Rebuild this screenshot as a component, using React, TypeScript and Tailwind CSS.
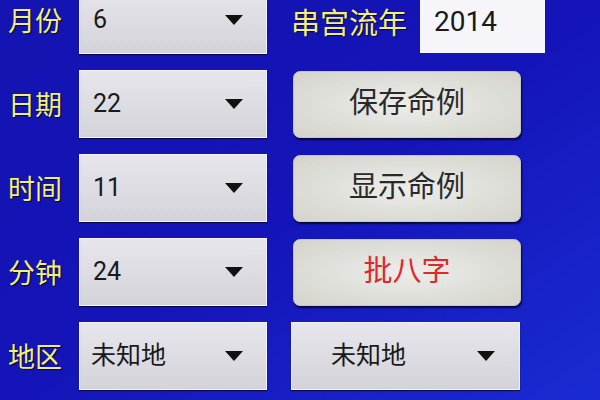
const font = "font-['Roboto','Noto_Sans_CJK_SC',sans-serif]";

const Label = ({ text }: { text: string }) => (
	<div className="w-[79px] pl-[8px] pt-[4px] text-[27px] leading-none text-[#f2f07a] [text-shadow:1px_1px_1px_rgba(0,0,0,0.7)]">
		{text}
	</div>
);

const Arrow = () => (
	<svg width="20" height="12" viewBox="0 0 20 12">
		<polygon points="1,1 19,1 10,11" fill="#111" />
	</svg>
);

const Spinner = ({ value, className }: { value: string; className: string }) => (
	<div
		className={`h-[68px] flex flex-row items-center bg-gradient-to-b from-[#e6e6ec] to-[#d3d3d9] border border-[#f4f4fa] shadow-[0_1px_1px_rgba(0,0,20,0.6)] ${className}`}
	>
		<span className="flex-1 text-[25px] text-[#1a1a1a]">{value}</span>
		<Arrow />
	</div>
);

const Button = ({ text, red }: { text: string; red?: boolean }) => (
	<button
		className={`ml-[26px] w-[228px] h-[67px] rounded-[7px] bg-[radial-gradient(ellipse_at_center,#ececea_0%,#d4d4cc_100%)] shadow-[1px_2px_2px_rgba(0,0,30,0.8)] border border-[#c8c8c0] text-[29px] ${red ? "text-[#e02828]" : "text-[#2a2a2a]"}`}
	>
		{text}
	</button>
);

export default function App() {
	return (
		<div
			className={`w-[600px] h-[400px] overflow-hidden bg-gradient-to-br from-[#1414b2] via-[#1414b8] to-[#1a2ad2] ${font}`}
		>
			<div className="flex flex-col gap-[16px] mt-[-14px]">
				<div className="flex flex-row items-center h-[68px]">
					<Label text="月份" />
					<Spinner value="6" className="w-[188px] pl-[13px] pr-[22px]" />
					<div className="ml-[24px] mt-[8px] text-[29px] leading-none text-[#f2f07a] [text-shadow:1px_1px_1px_rgba(0,0,0,0.7)]">
						串宫流年
					</div>
					<div className="ml-[13px] mt-[-2px] w-[125px] h-[68px] bg-[#f6f6fa] flex items-center pl-[14px] pt-[6px] text-[28px] text-[#1a1a1a]">
						2014
					</div>
				</div>
				<div className="flex flex-row items-center h-[68px]">
					<Label text="日期" />
					<Spinner value="22" className="w-[188px] pl-[13px] pr-[22px]" />
					<Button text="保存命例" />
				</div>
				<div className="flex flex-row items-center h-[68px]">
					<Label text="时间" />
					<Spinner value="11" className="w-[188px] pl-[13px] pr-[22px]" />
					<Button text="显示命例" />
				</div>
				<div className="flex flex-row items-center h-[68px]">
					<Label text="分钟" />
					<Spinner value="24" className="w-[188px] pl-[13px] pr-[22px]" />
					<Button text="批八字" red />
				</div>
				<div className="flex flex-row items-center h-[68px]">
					<Label text="地区" />
					<Spinner value="未知地" className="w-[188px] pl-[11px] pr-[22px]" />
					<Spinner value="未知地" className="ml-[24px] w-[229px] pl-[39px] pr-[23px]" />
				</div>
			</div>
		</div>
	);
}
